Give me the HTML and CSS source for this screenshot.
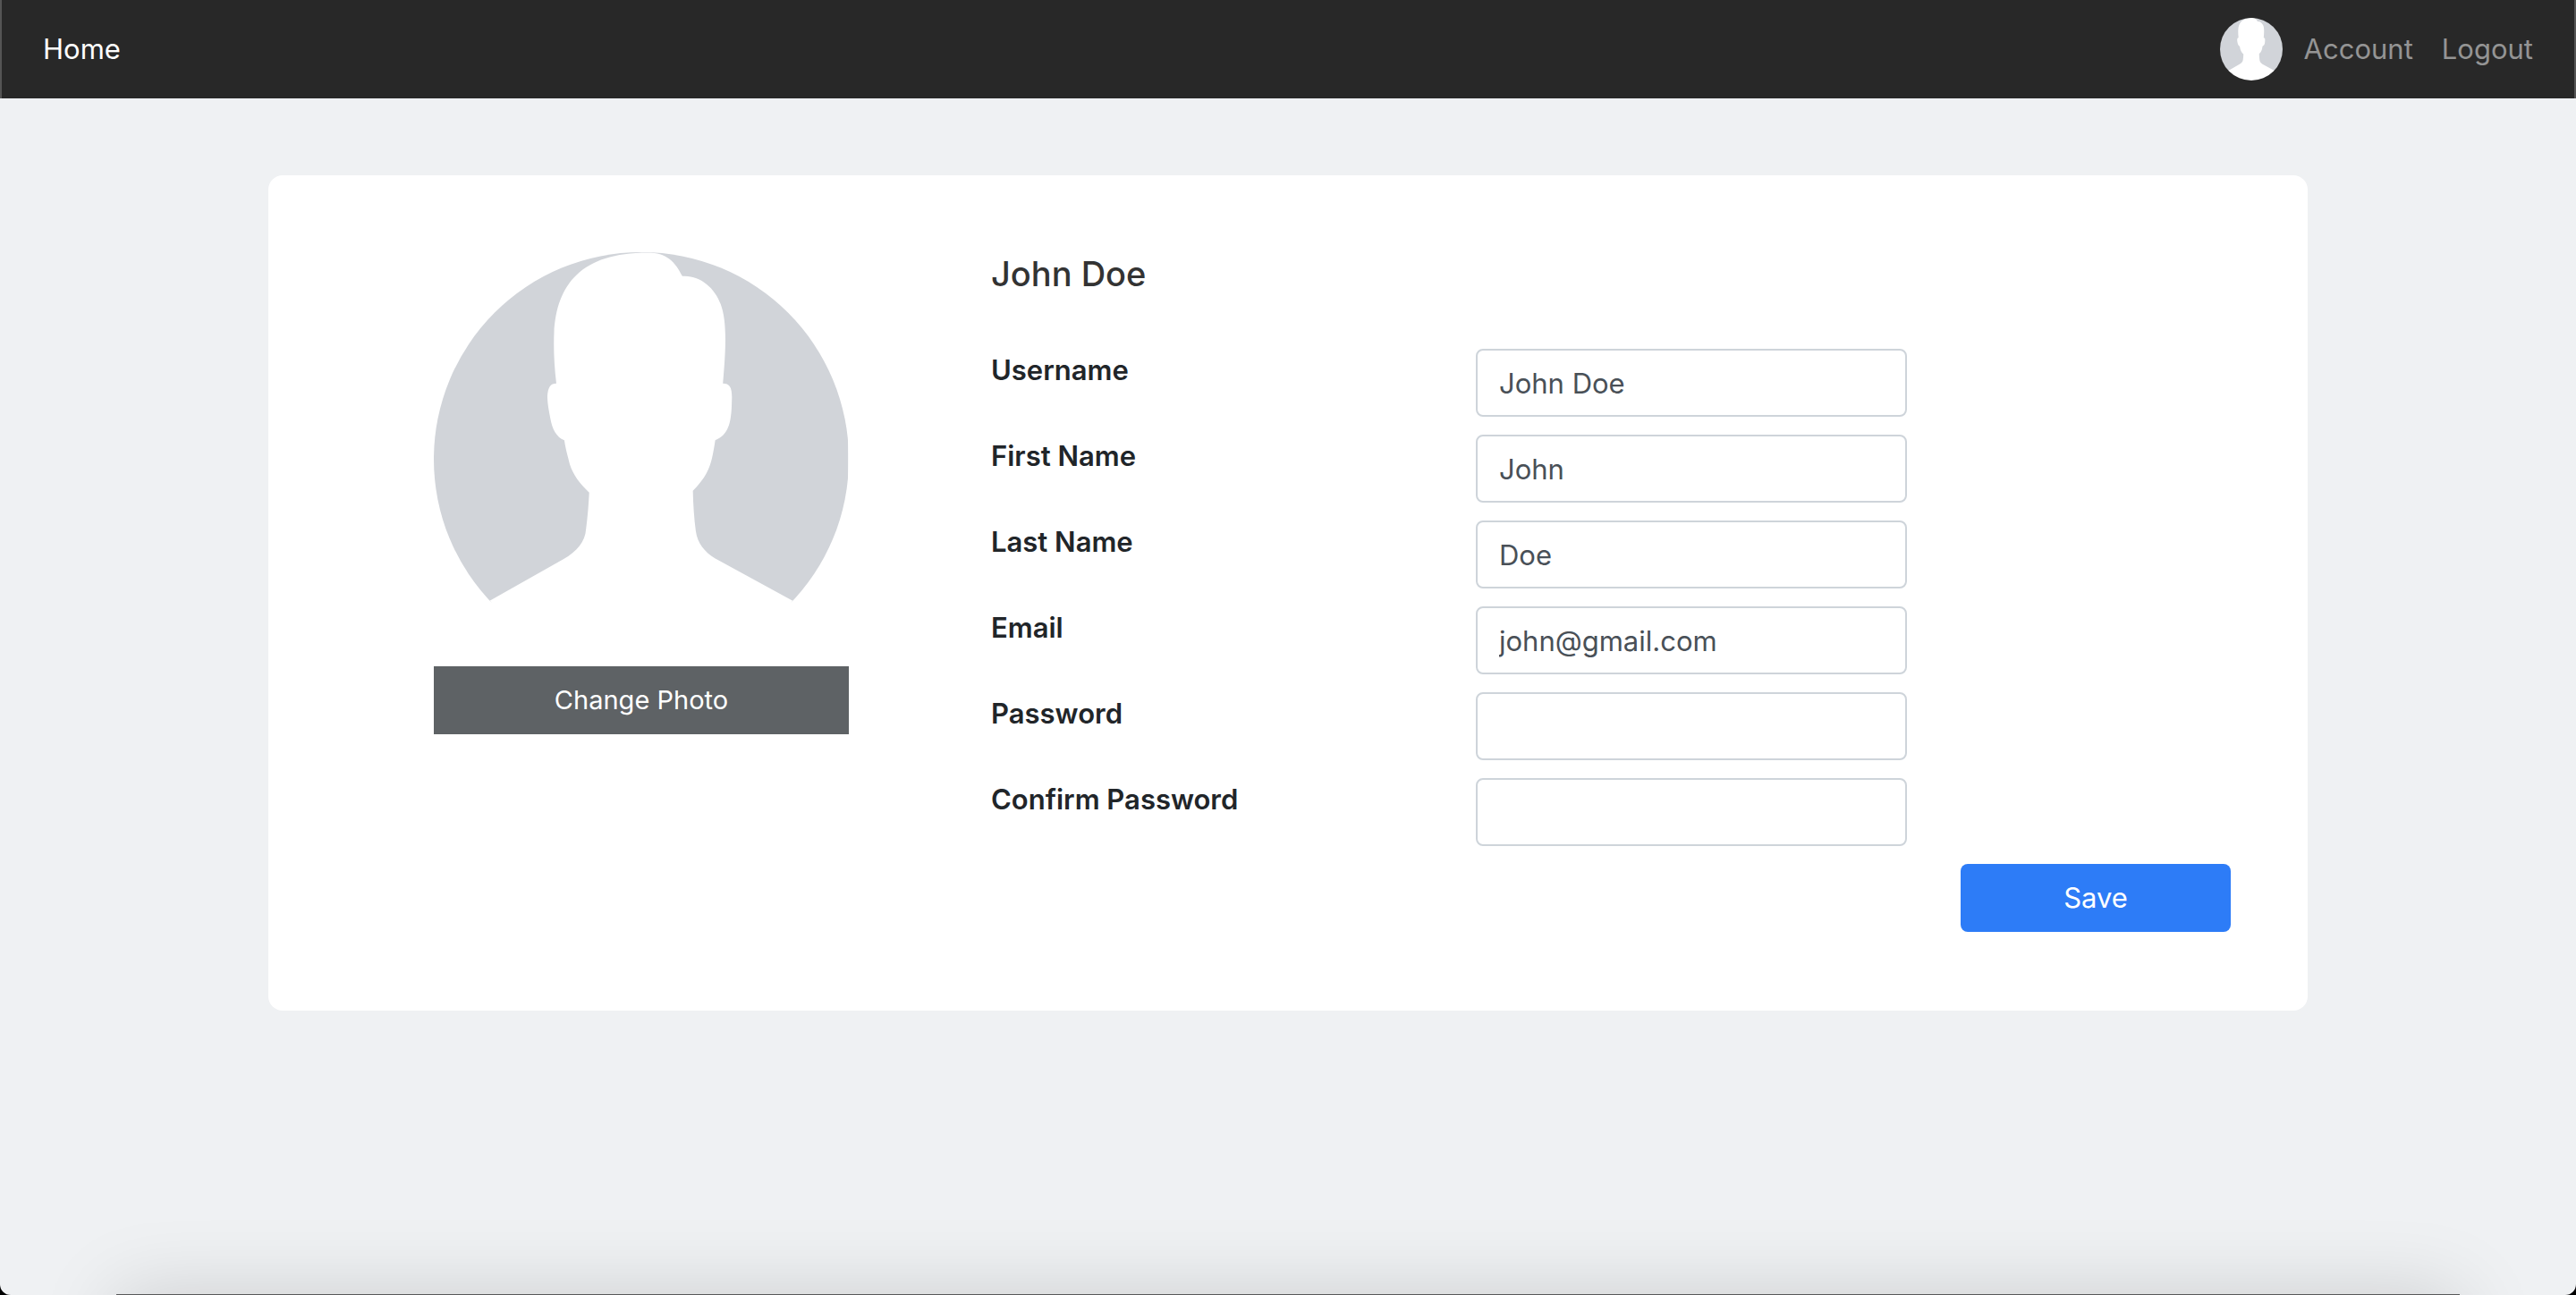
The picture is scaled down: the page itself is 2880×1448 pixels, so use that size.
FILE: index.html
```html
<!DOCTYPE html>
<html lang="en">
<head>
  <meta charset="utf-8">
  <meta name="viewport" content="width=device-width, initial-scale=1">
  <title>Account</title>
  <link rel="stylesheet" href="styles.css">
</head>
<body>
  <svg class="symbols" aria-hidden="true">
    <symbol id="person" viewBox="129 110 1299 1212" preserveAspectRatio="none">
      <rect x="129" y="110" width="1299" height="1024" fill="#d1d4d9"/>
      <path fill="#fff" d="M129 1222 L303 1130 L535 1008 C578 984 603 957 606 920 C611 885 614 850 616 813 C585 785 566 762 555 730 C547 700 542 685 538 660 C513 652 500 625 495 600 C488 565 485 550 485 530 C487 505 495 494 513 494 C506 440 504 390 506 345 C514 205 590 111 800 111 C858 111 885 137 908 180 C962 176 1010 214 1028 262 C1047 310 1046 380 1035 494 C1058 494 1065 508 1063 545 C1062 615 1050 645 1011 660 C999 735 990 760 941 808 C942 850 945 890 950 925 C955 962 978 987 1010 1005 L1255 1130 L1428 1220 V1322 H129 Z"/>
    </symbol>
  </svg>

  <div class="page">
    <nav class="navbar">
      <a class="nav-link nav-link-active" href="#">Home</a>
      <div class="nav-user">
        <svg class="avatar" role="img" aria-label="Profile photo"><use href="#person"/></svg>
        <a class="nav-link" href="#">Account</a>
        <a class="nav-link" href="#">Logout</a>
      </div>
    </nav>

    <main class="content">
      <form class="profile">
        <div class="photo">
          <svg class="photo-image" role="img" aria-label="Profile photo"><use href="#person"/></svg>
          <button class="photo-button" type="button">Change Photo</button>
        </div>
        <div class="details">
          <h1 class="name">John Doe</h1>
          <div class="field">
            <label for="username">Username</label>
            <input id="username" type="text" value="John Doe">
          </div>
          <div class="field">
            <label for="first-name">First Name</label>
            <input id="first-name" type="text" value="John">
          </div>
          <div class="field">
            <label for="last-name">Last Name</label>
            <input id="last-name" type="text" value="Doe">
          </div>
          <div class="field">
            <label for="email">Email</label>
            <input id="email" type="email" value="john@gmail.com">
          </div>
          <div class="field">
            <label for="password">Password</label>
            <input id="password" type="password">
          </div>
          <div class="field">
            <label for="confirm-password">Confirm Password</label>
            <input id="confirm-password" type="password">
          </div>
        </div>
        <button class="save" type="submit">Save</button>
      </form>
    </main>
    <div class="dock"></div>
  </div>
</body>
</html>
```
FILE: styles.css
```css
* {
  box-sizing: border-box;
}

html {
  background: #000;
}

body {
  margin: 0;
  font-family: Inter, "Liberation Sans", sans-serif;
  font-size: 31px;
  line-height: 48px;
  color: #212529;
}

.symbols {
  display: none;
}

.page {
  min-height: 100vh;
  overflow: hidden;
  background: #eff1f3;
  border-radius: 0 0 12px 12px;
}

.navbar {
  display: flex;
  align-items: center;
  justify-content: space-between;
  height: 110px;
  padding: 0 46px;
  background: #282828;
  border: solid #555;
  border-width: 0 2px;
}

.nav-user {
  display: flex;
  align-items: center;
  gap: 32px;
}

.nav-link {
  color: #949494;
  text-decoration: none;
}

.nav-link-active {
  color: #fff;
}

.avatar {
  width: 70px;
  height: 70px;
  margin-right: -8px;
  border-radius: 50%;
}

.content {
  padding: 86px 60px;
}

.profile {
  display: grid;
  grid-template-columns: 662fr 1024fr 302fr;
  column-gap: 60px;
  max-width: 2280px;
  margin: 0 auto;
  padding: 86px 86px 88px;
  background: #fff;
  border-radius: 16px;
}

.photo {
  display: flex;
  flex-direction: column;
  width: 70%;
  margin: 0 auto;
}

.photo-image {
  width: 100%;
  aspect-ratio: 1;
  border-radius: 50%;
}

.photo-button {
  height: 76px;
  padding: 0;
  border: 0;
  background: #5e6265;
  color: #fff;
  font: inherit;
  font-size: 29px;
}

.name {
  margin: 0 0 60px;
  font-size: 38px;
  font-weight: 500;
  line-height: 48px;
  color: #333;
}

.field {
  display: grid;
  grid-template-columns: 1fr 1fr;
  column-gap: 60px;
  margin-bottom: 20px;
}

.field label {
  font-weight: 600;
}

.field input {
  width: 100%;
  height: 76px;
  padding: 0 24px;
  border: 2px solid #ced4da;
  border-radius: 8px;
  background: #fff;
  color: #495057;
  font: inherit;
}

.save {
  grid-row: 2;
  grid-column: 3;
  height: 76px;
  padding: 0;
  border: 0;
  border-radius: 8px;
  background: #2d7cf7;
  color: #fff;
  font: inherit;
}

/* Shadow cast along the bottom edge of the window */
.dock {
  position: fixed;
  right: 130px;
  bottom: -199px;
  left: 130px;
  height: 200px;
  background: #58595a;
  box-shadow: 0 0 88px rgba(0, 0, 0, 0.15);
}
```
